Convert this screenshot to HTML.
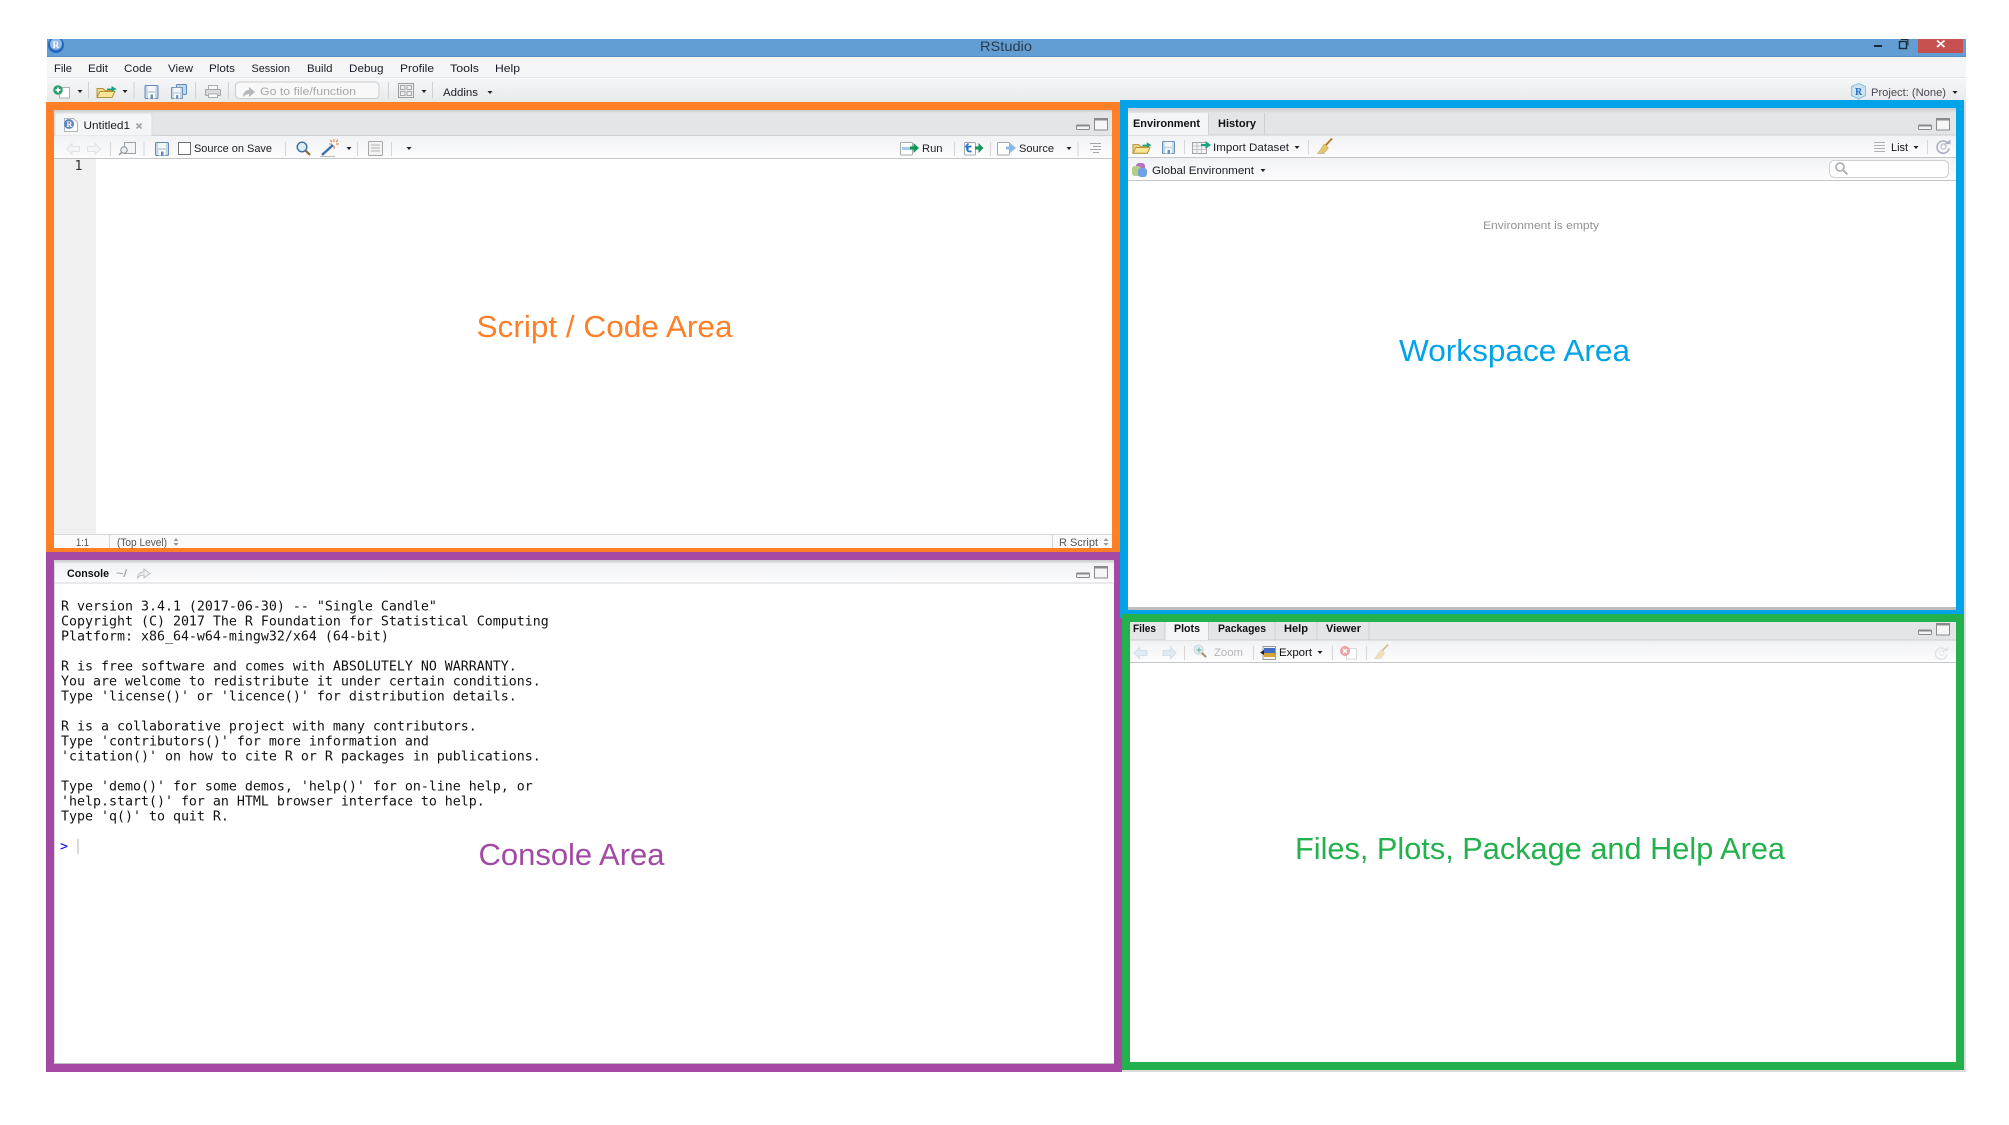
<!DOCTYPE html>
<html><head><meta charset="utf-8"><title>RStudio</title>
<style>
html,body{margin:0;padding:0;background:#fff;width:2009px;height:1125px;overflow:hidden}
svg{display:block}
text{font-family:"Liberation Sans",sans-serif;font-size:11px;fill:#1c1c28;white-space:pre}
.b{font-weight:bold;font-size:10.8px;fill:#111}
.m{font-family:"DejaVu Sans Mono","Liberation Mono",monospace;font-size:13.29px;fill:#111}
.l{font-size:31px}
.g{fill:#a8a8a8;font-size:10.6px}
</style></head><body>
<svg width="2009" height="1125" viewBox="0 0 2009 1125" xmlns="http://www.w3.org/2000/svg">
<defs>
<linearGradient id="tb" x1="0" y1="0" x2="0" y2="1"><stop offset="0" stop-color="#f1f2f4"/><stop offset="1" stop-color="#fcfcfd"/></linearGradient>
<linearGradient id="mt" x1="0" y1="0" x2="0" y2="1"><stop offset="0" stop-color="#f5f6f8"/><stop offset="1" stop-color="#e8e9eb"/></linearGradient>
<linearGradient id="st" x1="0" y1="0" x2="0" y2="1"><stop offset="0" stop-color="#c9cacc"/><stop offset="1" stop-color="#e4e5e7"/></linearGradient>
<clipPath id="tc"><rect x="47" y="39" width="40" height="18"/></clipPath>
<symbol id="save" viewBox="0 0 14 14" overflow="visible"><rect x=".5" y=".5" width="13" height="13" rx="1" fill="#c4d6e8" stroke="#5f8cb8"/><rect x="3" y="1" width="8" height="5" fill="#f4f7fa"/><rect x="3.5" y="8" width="7" height="5.500" fill="#fff"/><rect x="6" y="9.500" width="2.500" height="4" fill="#5f8cb8"/></symbol>
<symbol id="folder" viewBox="0 0 21 13" overflow="visible"><path d="M1 3.500h6l2 2h7v7H1z" fill="#eed68a" stroke="#b3953b"/><path d="M1 12.500L4 6.500H19L16 12.500z" fill="#f9e596" stroke="#b3953b"/><path d="M11 3.500h4.500V1l5 3-5 3V5H11z" fill="#1ba37f"/></symbol>
<symbol id="broom" viewBox="0 0 17 17" overflow="visible"><path d="M16 0.500L9 8" stroke="#b07a1c" stroke-width="2"/><path d="M8 6.500l4 3.500c-1 3-4 5.500-7.500 6.500H0.500C3 14 5 10 8 6.500z" fill="#e6c66a" stroke="#c9a548" stroke-width=".6"/><path d="M1 16.500h8" stroke="#bbb" stroke-width="1"/></symbol>
<symbol id="mini" viewBox="0 0 14 6" overflow="visible"><rect x=".5" y="1" width="13" height="4.500" rx="1" fill="#f4f4f5" stroke="#8a8a8c"/><rect x=".5" y=".5" width="13" height="2" rx="1" fill="#8a8a8c"/></symbol>
<symbol id="maxi" viewBox="0 0 14 12" overflow="visible"><rect x=".5" y=".5" width="13" height="11.500" fill="#f6f6f7" stroke="#8a8a8c"/><rect x="0" y="0" width="14" height="2.500" fill="#8a8a8c"/></symbol>
<symbol id="refresh" viewBox="0 0 16 16" overflow="visible"><path d="M13 5A6.500 6.500 0 1 0 14 10" fill="none" stroke="currentColor" stroke-width="1.800"/><circle cx="8" cy="8" r="2.800" fill="none" stroke="currentColor" stroke-width="1"/><path d="M9 5.500h6.500V0.500z" fill="currentColor"/></symbol>
<symbol id="arrowL" viewBox="0 0 14 12" overflow="visible"><path d="M.5 6L6 .5V3.500h7.500v5H6v3z" fill="currentColor" stroke="#d2dde6" stroke-width="1"/></symbol>
<symbol id="arrowR" viewBox="0 0 14 12" overflow="visible"><path d="M13.500 6L8 .5V3.500H.5v5H8v3z" fill="currentColor" stroke="#d2dde6" stroke-width="1"/></symbol>
<symbol id="mag" viewBox="0 0 15 15" overflow="visible"><circle cx="6" cy="6" r="4.800" fill="#dcebf6" stroke="currentColor" stroke-width="1.400"/><path d="M9.500 9.500L14 14" stroke="#8a6a3a" stroke-width="2.200"/></symbol>
</defs>

<!-- title bar -->
<rect x="47" y="39" width="1919" height="18" fill="#629ed4"/>
<rect x="47" y="56" width="1919" height="1" fill="#5a90c2"/>
<g clip-path="url(#tc)"><circle cx="56" cy="45" r="8" fill="#2468bd"/><circle cx="56" cy="44" r="6" fill="#8fb9e6"/></g>
<text x="52.500" y="48" style="font-family:'Liberation Serif',serif;font-weight:bold;font-size:9.500px;fill:#fff">R</text>
<text x="980" y="51" style="font-size:14px;fill:#2b3a4c" textLength="52" lengthAdjust="spacingAndGlyphs">RStudio</text>
<rect x="1874" y="45" width="8" height="2" fill="#1d2a38"/>
<rect x="1899.500" y="41.500" width="7" height="7" fill="none" stroke="#1d2a38" stroke-width="1.400"/><path d="M1901 39.500h7v6" fill="none" stroke="#1d2a38" stroke-width="1"/>
<rect x="1918" y="39" width="45" height="14" fill="#c75050"/>
<path d="M1937 40.500L1944.500 47M1944.500 40.500L1937 47" stroke="#fff" stroke-width="1.800"/>

<!-- menu -->
<rect x="47" y="57" width="1919" height="20" fill="#f4f5f7"/>
<rect x="47" y="77" width="1919" height="1" fill="#e4e5e7"/>
<rect x="47" y="78" width="1919" height="1" fill="#fbfbfc"/>
<rect x="47" y="79" width="1919" height="23" fill="url(#mt)"/>
<text x="54" y="72" textLength="18" lengthAdjust="spacingAndGlyphs">File</text>
<text x="88" y="72" textLength="20" lengthAdjust="spacingAndGlyphs">Edit</text>
<text x="124" y="72" textLength="28" lengthAdjust="spacingAndGlyphs">Code</text>
<text x="168" y="72" textLength="25" lengthAdjust="spacingAndGlyphs">View</text>
<text x="209" y="72" textLength="26" lengthAdjust="spacingAndGlyphs">Plots</text>
<text x="251.500" y="72" textLength="38.500" lengthAdjust="spacingAndGlyphs">Session</text>
<text x="307" y="72" textLength="25.500" lengthAdjust="spacingAndGlyphs">Build</text>
<text x="349" y="72" textLength="34.500" lengthAdjust="spacingAndGlyphs">Debug</text>
<text x="400" y="72" textLength="34" lengthAdjust="spacingAndGlyphs">Profile</text>
<text x="450" y="72" textLength="29" lengthAdjust="spacingAndGlyphs">Tools</text>
<text x="495" y="72" textLength="25" lengthAdjust="spacingAndGlyphs">Help</text>

<!-- main toolbar -->
<rect x="59.500" y="87.500" width="10" height="10.500" fill="#fff" stroke="#aeb2b6"/>
<circle cx="58" cy="90" r="4.800" fill="#2a9d6f"/><path d="M55.500 90h5M58 87.500v5" stroke="#fff" stroke-width="1.800"/>
<path d="M77.500 90h5l-2.500 3z" fill="#222"/>
<rect x="88" y="82" width="1" height="16" fill="#d0d1d3"/>
<use href="#folder" x="96" y="85" width="21" height="13"/>
<path d="M122.500 90h5l-2.500 3z" fill="#222"/>
<rect x="133.500" y="82" width="1" height="16" fill="#d0d1d3"/>
<use href="#save" x="144.500" y="85" width="14" height="14"/>
<rect x="176.500" y="84.500" width="10" height="10" rx="1" fill="#c4d6e8" stroke="#5f8cb8"/>
<use href="#save" x="171" y="87" width="12" height="12"/>
<rect x="195" y="82" width="1" height="16" fill="#d0d1d3"/>
<rect x="208.500" y="85.500" width="9" height="4" fill="#f7f7f7" stroke="#a9acb0"/><rect x="205.500" y="89.500" width="15" height="6" rx="1" fill="#d8dadd" stroke="#a0a3a7"/><rect x="208.500" y="94" width="9" height="3.500" fill="#fff" stroke="#a9acb0"/>
<rect x="228" y="82" width="1" height="16" fill="#d0d1d3"/>
<rect x="235.500" y="82" width="143.500" height="16.500" rx="4" fill="#f8f8f9" stroke="#c9cbce"/>
<path d="M243 97c0-5 3-7 6-7v-3l6 5-6 5v-3c-2 0-4 1-6 3z" fill="#b3b6ba"/>
<text x="260" y="95" class="g" textLength="96" lengthAdjust="spacingAndGlyphs">Go to file/function</text>
<rect x="388" y="82" width="1" height="16" fill="#d0d1d3"/>
<rect x="398.500" y="83.500" width="15" height="14" fill="#eeeff0" stroke="#9a9da0"/><rect x="400.500" y="85.500" width="4.500" height="4" fill="none" stroke="#a5a8ab"/><rect x="407" y="85.500" width="4.500" height="4" fill="none" stroke="#a5a8ab"/><rect x="400.500" y="91.500" width="4.500" height="4" fill="none" stroke="#a5a8ab"/><rect x="407" y="91.500" width="4.500" height="4" fill="none" stroke="#a5a8ab"/>
<path d="M421.500 90h5l-2.500 3z" fill="#222"/>
<rect x="432" y="82" width="1" height="16" fill="#d0d1d3"/>
<text x="443" y="96" textLength="35" lengthAdjust="spacingAndGlyphs">Addins</text>
<path d="M487.500 91h5l-2.500 3z" fill="#222"/>
<path d="M1858.500 83.500l7 3v9l-7 3.500-7-3.500v-9z" fill="#cfe6f2" stroke="#8cc0d8"/><path d="M1851.500 86.500l7 3 7-3M1858.500 89.500v9" fill="none" stroke="#a9d2e4" stroke-width=".7"/>
<text x="1855" y="95" style="font-family:'Liberation Serif',serif;font-weight:bold;font-size:10px;fill:#2b6fc4">R</text>
<text x="1871" y="96" style="fill:#4a4656" textLength="75" lengthAdjust="spacingAndGlyphs">Project: (None)</text>
<path d="M1952.500 91h5l-2.500 3z" fill="#222"/>

<!-- gray window edge -->
<rect x="1964" y="102" width="2" height="970" fill="#dcdcdc"/>
<rect x="1122" y="1070" width="844" height="2" fill="#dcdcdc"/>

<!-- SOURCE PANE -->
<rect x="46" y="102" width="1074" height="450" fill="#ff7f27"/>
<rect x="54" y="110" width="1058" height="438" fill="#fff"/>
<rect x="54" y="110" width="1058" height="3" fill="url(#st)"/>
<rect x="54" y="113" width="1058" height="22" fill="#e4e5e7"/>
<rect x="54" y="135" width="1058" height="1" fill="#cdcfd1"/>
<path d="M55 136V116q0-3 3-3H149q3 0 3 3V136z" fill="#f4f5f7" stroke="#dcdde0"/>
<rect x="54" y="136" width="1058" height="22" fill="url(#tb)"/>
<rect x="54" y="158" width="1058" height="1" fill="#c4c6c8"/>
<path d="M64.500 118.500h9l4 4v9h-13z" fill="#fff" stroke="#b4b7ba"/><circle cx="69" cy="124" r="5" fill="#5f86c0"/>
<text x="66.500" y="127" style="font-family:'Liberation Serif',serif;font-weight:bold;font-size:8px;fill:#fff">R</text>
<text x="83.500" y="129" textLength="46.500" lengthAdjust="spacingAndGlyphs">Untitled1</text>
<path d="M136.500 123.500l5 5M141.500 123.500l-5 5" stroke="#a5a5a5" stroke-width="1.800"/>
<use href="#mini" x="1076" y="124" width="14" height="6"/>
<use href="#maxi" x="1094" y="118" width="14" height="12"/>

<use href="#arrowL" x="66" y="143" width="14" height="12" style="color:#f3f3f4" opacity=".7"/>
<use href="#arrowR" x="87" y="143" width="14" height="12" style="color:#f3f3f4" opacity=".7"/>
<rect x="110" y="142" width="1" height="14" fill="#d5d6d8"/>
<rect x="124.500" y="142.500" width="11" height="11" fill="#f2f4f6" stroke="#9ea2a6"/><circle cx="124" cy="150" r="3.200" fill="#e8eef4" stroke="#8d9196"/><path d="M121.500 152.500l-2.500 2.500" stroke="#8d9196" stroke-width="1.300"/>
<rect x="143.500" y="142" width="1" height="14" fill="#d5d6d8"/>
<use href="#save" x="155" y="142" width="14" height="14"/>
<rect x="178.500" y="142.500" width="12" height="12" fill="#fff" stroke="#707070"/>
<text x="194" y="152" textLength="78" lengthAdjust="spacingAndGlyphs">Source on Save</text>
<rect x="285" y="142" width="1" height="14" fill="#d5d6d8"/>
<use href="#mag" x="296" y="141" width="15" height="15" style="color:#3d6e9e"/>
<path d="M322 155l11-10" stroke="#3b6fb0" stroke-width="2.400"/><path d="M334 139v3M334 146v3M329 144h3M336 144h3M330 140l2 2M338 140l-2 2" stroke="#e07a3a" stroke-width="1"/><path d="M320 156.500h15" stroke="#bbb"/>
<path d="M346.500 147h5l-2.500 3z" fill="#222"/>
<rect x="357" y="142" width="1" height="14" fill="#d5d6d8"/>
<rect x="368.500" y="141.500" width="14" height="14" rx="1" fill="#f2f2f2" stroke="#a8a8a8"/><path d="M371 145h9M371 148h9M371 151h9" stroke="#b4b4b4"/>
<rect x="391" y="142" width="1" height="14" fill="#d5d6d8"/>
<path d="M406.500 147h5l-2.500 3z" fill="#222"/>

<rect x="900.500" y="142.500" width="12" height="12.500" rx="1" fill="#fff" stroke="#a6a9ac"/><rect x="902" y="147" width="9" height="3" fill="#a9c9ec"/>
<path d="M910 146.500h3.500v-3.500l5.500 5-5.500 5v-3.500h-3.500z" fill="#129657"/>
<text x="922" y="152" textLength="20.500" lengthAdjust="spacingAndGlyphs">Run</text>
<rect x="954" y="142" width="1" height="14" fill="#d5d6d8"/>
<rect x="964.500" y="142.500" width="11" height="12.500" rx="1" fill="#fff" stroke="#a6a9ac"/>
<path d="M971.500 151.500h-2a2.500 2.500 0 0 1 0-5h2M968.500 143.500l-2.500 3 2.500 3" fill="none" stroke="#1d6fd0" stroke-width="1.700"/>
<path d="M975 146.500h3.500v-3.500l5 5-5 5v-3.500H975z" fill="#129657"/>
<rect x="990" y="142" width="1" height="14" fill="#d5d6d8"/>
<rect x="997.500" y="142.500" width="12" height="12.500" rx="1" fill="#fff" stroke="#a6a9ac"/>
<path d="M1006 146.500h4v-3.500l6 5-6 5v-3.500h-4z" fill="#8cb9e4"/>
<text x="1019" y="152" textLength="35" lengthAdjust="spacingAndGlyphs">Source</text>
<path d="M1066.500 147h5l-2.500 3z" fill="#222"/>
<rect x="1077.500" y="142" width="1" height="14" fill="#d5d6d8"/>
<path d="M1090 143.500h11M1093 146.500h8M1090 149.500h11M1093 152.500h6" stroke="#a4a4a4"/>

<rect x="54" y="159" width="42" height="375" fill="#f0f0f0"/>
<text class="m" x="74.500" y="170" style="fill:#333">1</text>
<rect x="54" y="534" width="1058" height="1" fill="#d6d8da"/>
<rect x="54" y="535" width="1058" height="13" fill="#fafafa"/>
<rect x="109" y="534" width="1" height="14" fill="#d6d8da"/>
<rect x="1052" y="534" width="1" height="14" fill="#d6d8da"/>
<text x="76" y="546" style="fill:#555" textLength="13" lengthAdjust="spacingAndGlyphs">1:1</text>
<text x="117" y="546" style="fill:#555" textLength="50" lengthAdjust="spacingAndGlyphs">(Top Level)</text>
<path d="M173.500 541l2.500-3 2.500 3zM173.500 543l2.500 3 2.500-3z" fill="#999"/>
<text x="1059" y="546" style="fill:#555" textLength="39" lengthAdjust="spacingAndGlyphs">R Script</text>
<path d="M1103.500 541l2.500-3 2.500 3zM1103.500 543l2.500 3 2.500-3z" fill="#999"/>

<!-- CONSOLE PANE -->
<rect x="46" y="552" width="1076" height="520" fill="#a349a4"/>
<rect x="54" y="560" width="1060" height="504" fill="#fff"/>
<rect x="54" y="560" width="1060" height="3" fill="url(#st)"/>
<rect x="54" y="563" width="1060" height="20" fill="url(#tb)"/>
<rect x="54" y="582.500" width="1060" height="1" fill="#d4d6d8"/>
<rect x="54" y="1063" width="1060" height="1" fill="#bdbdbd"/>
<rect x="54" y="560" width="1" height="504" fill="#d8d8d8"/>
<text x="67" y="577" class="b" textLength="42" lengthAdjust="spacingAndGlyphs">Console</text>
<text x="116" y="577" style="fill:#909090" textLength="11" lengthAdjust="spacingAndGlyphs">~/</text>
<path d="M137.500 578c0-4 3-6 6.500-6v-3l6 4.500-6 4.500v-3c-3 0-5 1-6.500 3z" fill="#eef0f2" stroke="#bcc0c4"/>
<use href="#mini" x="1076" y="572" width="14" height="6"/>
<use href="#maxi" x="1094" y="566" width="14" height="12"/>

<text class="m" x="61" y="610.500">R version 3.4.1 (2017-06-30) -- "Single Candle"</text>
<text class="m" x="61" y="625.500">Copyright (C) 2017 The R Foundation for Statistical Computing</text>
<text class="m" x="61" y="640.500">Platform: x86_64-w64-mingw32/x64 (64-bit)</text>
<text class="m" x="61" y="670.500">R is free software and comes with ABSOLUTELY NO WARRANTY.</text>
<text class="m" x="61" y="685.500">You are welcome to redistribute it under certain conditions.</text>
<text class="m" x="61" y="700.500">Type 'license()' or 'licence()' for distribution details.</text>
<text class="m" x="61" y="730.500">R is a collaborative project with many contributors.</text>
<text class="m" x="61" y="745.500">Type 'contributors()' for more information and</text>
<text class="m" x="61" y="760.500">'citation()' on how to cite R or R packages in publications.</text>
<text class="m" x="61" y="790.500">Type 'demo()' for some demos, 'help()' for on-line help, or</text>
<text class="m" x="61" y="805.500">'help.start()' for an HTML browser interface to help.</text>
<text class="m" x="61" y="820.500">Type 'q()' to quit R.</text>
<text class="m" x="60" y="850.500" style="fill:#0000ff">&gt;</text>
<rect x="77.500" y="839" width="1" height="15" fill="#b5b5b5"/>

<!-- ENV PANE -->
<rect x="1120" y="100" width="844" height="8" fill="#00a2e8"/>
<rect x="1120" y="100" width="8" height="518" fill="#00a2e8"/>
<rect x="1956" y="100" width="8" height="514" fill="#00a2e8"/>
<rect x="1120" y="610" width="844" height="4" fill="#00a2e8"/>
<rect x="1128" y="108" width="828" height="502" fill="#fff"/>
<rect x="1128" y="607" width="828" height="3" fill="#bdbdbd"/>
<rect x="1128" y="108" width="828" height="5" fill="url(#st)"/>
<rect x="1128" y="113" width="828" height="22" fill="#e4e5e7"/>
<rect x="1128" y="134.500" width="828" height="1" fill="#cdcfd1"/>
<path d="M1128 135V113H1208V135z" fill="#f4f5f7"/><path d="M1208.500 113V135" stroke="#d2d3d5"/>
<path d="M1264.500 113V135" stroke="#cfd0d2"/>
<text x="1133" y="127" class="b" textLength="67" lengthAdjust="spacingAndGlyphs">Environment</text>
<text x="1218" y="127" class="b" textLength="38" lengthAdjust="spacingAndGlyphs">History</text>
<use href="#mini" x="1918" y="124" width="14" height="6"/>
<use href="#maxi" x="1936" y="118" width="14" height="12"/>
<rect x="1128" y="135.500" width="828" height="21.500" fill="url(#tb)"/>
<rect x="1128" y="157" width="828" height="1" fill="#c4c6c8"/>
<use href="#folder" x="1132" y="141" width="20" height="13"/>
<use href="#save" x="1162" y="141" width="13" height="13"/>
<rect x="1184" y="140" width="1" height="14" fill="#d5d6d8"/>
<rect x="1192.500" y="142.500" width="14" height="11" fill="#f4f4f4" stroke="#a3a6a9"/><path d="M1192.500 146h14M1192.500 149.500h14M1197 142.500v11M1201.500 142.500v11" stroke="#b4b7ba" stroke-width=".8"/>
<path d="M1201 144h4.500v-3l5.500 4-5.500 4v-3H1201z" fill="#1ba37f"/>
<text x="1213" y="151" textLength="76" lengthAdjust="spacingAndGlyphs">Import Dataset</text>
<path d="M1294.500 146h5l-2.500 3z" fill="#222"/>
<rect x="1308" y="140" width="1" height="14" fill="#d5d6d8"/>
<use href="#broom" x="1317" y="138" width="16" height="16"/>
<path d="M1874 142.500h11M1874 145.500h11M1874 148.500h11M1874 151.500h11" stroke="#aeb0b2"/>
<text x="1891" y="151" style="fill:#111" textLength="17" lengthAdjust="spacingAndGlyphs">List</text>
<path d="M1913.500 146h5l-2.500 3z" fill="#222"/>
<rect x="1927" y="140" width="1" height="14" fill="#d5d6d8"/>
<use href="#refresh" x="1936" y="139" width="15" height="15" style="color:#aab2c4"/>
<rect x="1128" y="158" width="828" height="22" fill="url(#tb)"/>
<rect x="1128" y="180" width="828" height="1" fill="#c4c6c8"/>
<rect x="1136" y="163" width="9" height="9" rx="3" fill="#b471c6"/><rect x="1132" y="166" width="9" height="10" rx="3" fill="#b5cc85"/><rect x="1138" y="168" width="9" height="9" rx="3" fill="#6f9fe6"/>
<text x="1152" y="174" textLength="102" lengthAdjust="spacingAndGlyphs">Global Environment</text>
<path d="M1260.500 169h5l-2.500 3z" fill="#222"/>
<rect x="1829.500" y="160.500" width="119" height="17" rx="5" fill="#fff" stroke="#cfd1d4"/>
<circle cx="1840" cy="167" r="4" fill="none" stroke="#b0b4b8" stroke-width="1.800"/><path d="M1843 170l4.500 4.500" stroke="#b0b4b8" stroke-width="2"/>
<text x="1483" y="229" style="fill:#929292" textLength="116" lengthAdjust="spacingAndGlyphs">Environment is empty</text>

<!-- FILES PANE -->
<rect x="1122" y="614" width="842" height="456" fill="#22b14c"/>
<rect x="1130" y="622" width="826" height="440" fill="#fff"/>
<rect x="1130" y="622" width="826" height="18" fill="#e4e5e7"/>
<rect x="1130" y="639.500" width="826" height="1" fill="#cdcfd1"/>
<path d="M1165 640V622H1208V640z" fill="#f4f5f7"/>
<path d="M1165 622V640M1208.500 622V640M1275 622V640M1317 622V640M1369 622V640" stroke="#cfd0d2"/>
<text x="1133" y="632" class="b" textLength="23" lengthAdjust="spacingAndGlyphs">Files</text>
<text x="1174" y="632" class="b" textLength="26" lengthAdjust="spacingAndGlyphs">Plots</text>
<text x="1218" y="632" class="b" textLength="48" lengthAdjust="spacingAndGlyphs">Packages</text>
<text x="1284" y="632" class="b" textLength="24" lengthAdjust="spacingAndGlyphs">Help</text>
<text x="1326" y="632" class="b" textLength="35" lengthAdjust="spacingAndGlyphs">Viewer</text>
<use href="#mini" x="1918" y="629" width="14" height="6"/>
<use href="#maxi" x="1936" y="623" width="14" height="12"/>
<rect x="1130" y="640.500" width="826" height="21.500" fill="url(#tb)"/>
<rect x="1130" y="662" width="826" height="1" fill="#c4c6c8"/>
<use href="#arrowL" x="1133" y="647" width="15" height="12" style="color:#dfeaf4"/>
<use href="#arrowR" x="1162" y="647" width="15" height="12" style="color:#dfeaf4"/>
<rect x="1184" y="646" width="1" height="14" fill="#d5d6d8"/>
<use href="#mag" x="1193" y="644" width="14" height="14" style="color:#c4d0d8" opacity=".75"/>
<path d="M1199 647.500v5M1196.500 650h5" stroke="#6cc0a0" stroke-width="1.200"/>
<text x="1214" y="656" style="fill:#b4b4b4" textLength="29" lengthAdjust="spacingAndGlyphs">Zoom</text>
<rect x="1253" y="646" width="1" height="14" fill="#d5d6d8"/>
<rect x="1263" y="646.500" width="12.500" height="13" fill="#f4f4f4" stroke="#9a9a9a"/><rect x="1264" y="648" width="11" height="5" fill="#3f6ec0"/><rect x="1264" y="653" width="11" height="4" fill="#d9a33a"/>
<path d="M1260 652.500l4-2.500v5z" fill="#222"/>
<text x="1279" y="656" style="fill:#111" textLength="33" lengthAdjust="spacingAndGlyphs">Export</text>
<path d="M1317.500 651h5l-2.500 3z" fill="#222"/>
<rect x="1332" y="646" width="1" height="14" fill="#d5d6d8"/>
<rect x="1346.500" y="648.500" width="10" height="10.500" fill="#fff" stroke="#d8d8d8"/>
<circle cx="1345" cy="651" r="5" fill="#eaa3a3"/><path d="M1343 649l4 4M1347 649l-4 4" stroke="#fff" stroke-width="1.500"/>
<rect x="1366" y="646" width="1" height="14" fill="#d5d6d8"/>
<use href="#broom" x="1373" y="644" width="17" height="15" opacity=".45"/>
<use href="#refresh" x="1934" y="646" width="15" height="14" style="color:#e0e3e8"/>

<!-- labels -->
<text x="476.500" y="337" class="l" style="fill:#ff7f27" textLength="256" lengthAdjust="spacingAndGlyphs">Script / Code Area</text>
<text x="1399" y="361" class="l" style="fill:#00a2e8" textLength="231" lengthAdjust="spacingAndGlyphs">Workspace Area</text>
<text x="478.500" y="865" class="l" style="fill:#a349a4" textLength="186" lengthAdjust="spacingAndGlyphs">Console Area</text>
<text x="1295" y="859" class="l" style="fill:#22b14c" textLength="490" lengthAdjust="spacingAndGlyphs">Files, Plots, Package and Help Area</text>
</svg>
</body></html>
